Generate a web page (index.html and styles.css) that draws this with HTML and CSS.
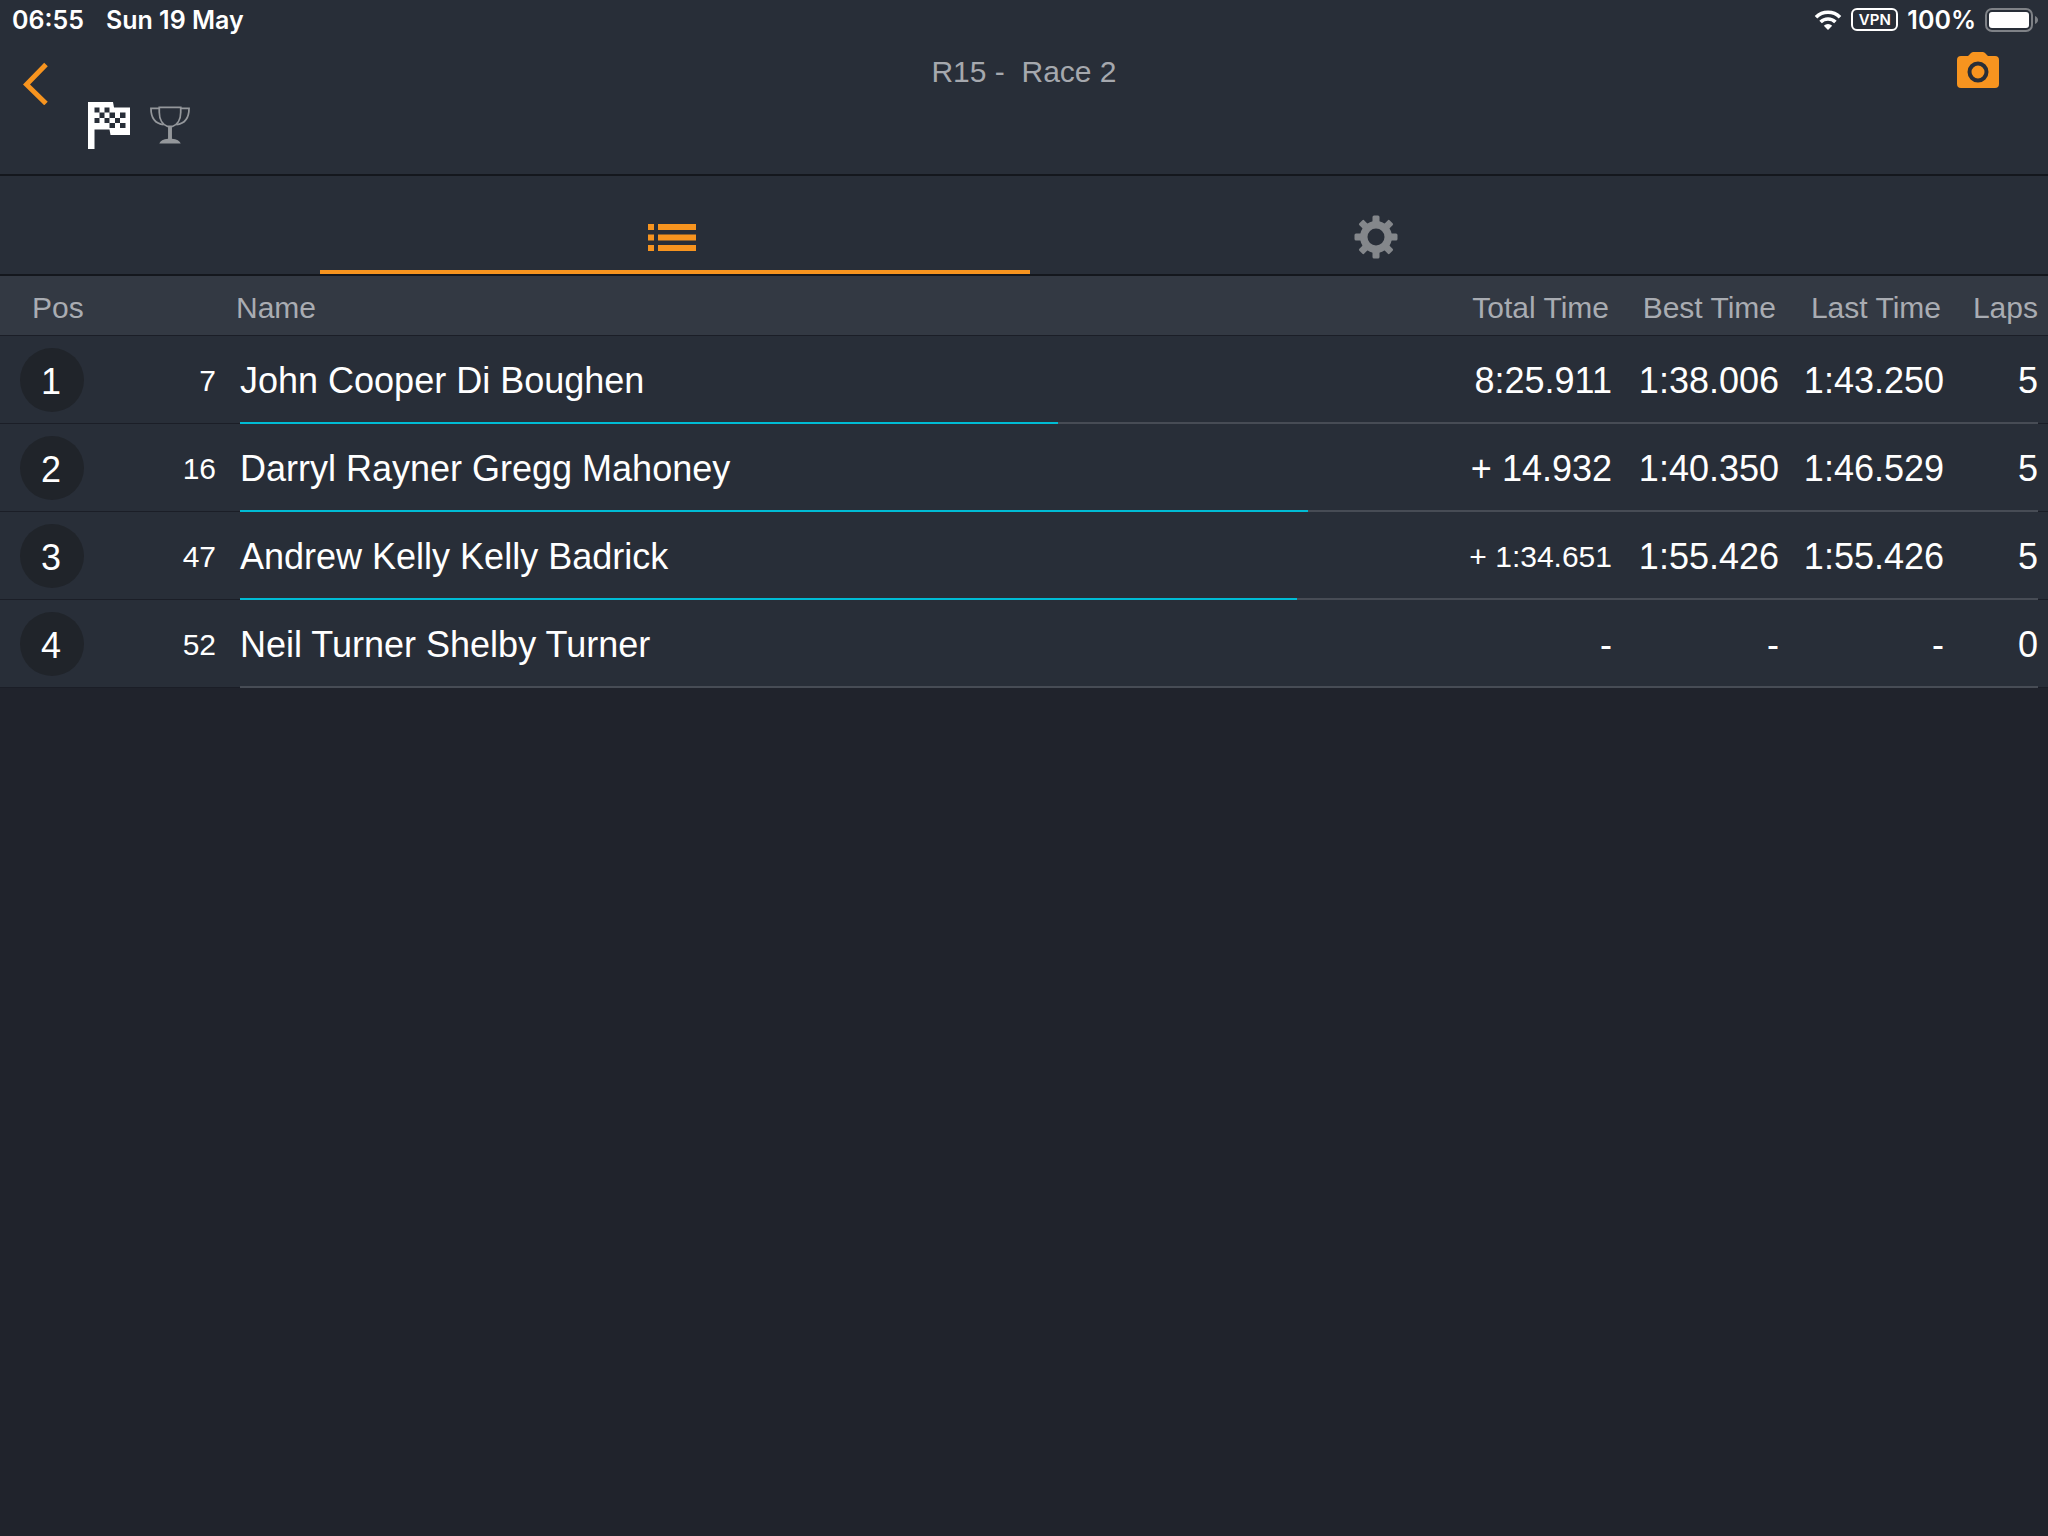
FILE: index.html
```
<!DOCTYPE html>
<html lang="en">
  <head>
    <meta charset="UTF-8" />
    <meta name="viewport" content="width=device-width, initial-scale=1.0" />
    <title>R15 - Race 2</title>
    <link rel="stylesheet" href="styles.css" />
  </head>

  <body>
    <header>
      <div class="status-bar">
        <div class="status-left">
          <span>06:55</span>
          <span>Sun 19 May</span>
        </div>
        <div class="status-right">
          <svg class="wifi" viewBox="0 0 28 20" width="28" height="20">
            <path d="M2 7.2a17 17 0 0 1 24 0" fill="none" stroke="#fff" stroke-width="3.6" />
            <path d="M6.6 12a10.6 10.6 0 0 1 14.8 0" fill="none" stroke="#fff" stroke-width="3.6" />
            <path d="M14 20l-4.2-4.3a6 6 0 0 1 8.4 0z" fill="#fff" />
          </svg>
          <span class="vpn">VPN</span>
          <span class="battery-level">100%</span>
          <svg class="battery" viewBox="0 0 53 24" width="53" height="24">
            <rect x="1" y="1" width="46" height="22" rx="6" fill="none" stroke="#7f8287" stroke-width="2" />
            <rect x="4" y="4" width="40" height="16" rx="3" fill="#fff" />
            <path d="M50 8c4 1.500 4 6.500 0 8z" fill="#7f8287" />
          </svg>
        </div>
      </div>

      <div class="title-bar">
        <button class="icon-button back" aria-label="Back">
          <svg viewBox="0 0 26 44" width="26" height="44">
            <path d="M23 3.500L3.500 23.500l19.500 19" fill="none" stroke="#f7941f" stroke-width="5" />
          </svg>
        </button>
        <h1>R15 - &nbsp;Race 2</h1>
        <button class="icon-button camera" aria-label="Camera">
          <svg viewBox="0 0 42 36" width="42" height="36">
            <path d="M4 4h7l3-3q1-1 2.500-1h9q1.500 0 2.500 1l3 3h7q4 0 4 4v24q0 4-4 4H4q-4 0-4-4V8q0-4 4-4z" fill="#f7941f" />
            <circle cx="21" cy="20" r="8.500" fill="none" stroke="#282e38" stroke-width="4" />
          </svg>
        </button>
      </div>

      <div class="race-icons">
        <svg class="flag" viewBox="0 0 42 48" width="42" height="48">
          <path d="M0 0h25l1 5.500h16V33H22.500l-1-5.500H6.500v19.500H0z" fill="#fff" />
          <path d="M6.500 5.500h5v5h-5zM16.500 5.500h5v5h-5zM11.500 10.500h5v5.500h-5zM21.500 10.500h5.500v5.500h-5.500zM32 10.500h5.500v5.500h-5.500zM6.500 16h5v5h-5zM16.500 16h5v5h-5zM27 16h5v5h-5zM21.500 21h5.500v5h-5.500zM32 21h5.500v5h-5.500z" fill="#282e38" />
        </svg>
        <svg class="trophy" viewBox="0 0 41 38" width="40" height="38">
          <g fill="none" stroke="#94979b" stroke-width="1.800">
            <path d="M9.500 1h22v5c0 8-4 13-8.500 14.500h-5C13.500 19 9.500 14 9.500 6z" />
            <path d="M9.500 2H1c0 9 4 15.500 13 16.500M31.500 2H40c0 9-4 15.500-13 16.500" />
          </g>
          <path d="M18.500 20.500h4V33c5 .500 8 2 9 5h-22c1-3 4-4.500 9-5z" fill="#94979b" />
        </svg>
      </div>
    </header>

    <nav class="tabs">
      <button class="tab active" aria-label="Results">
        <svg viewBox="0 0 48 27" width="48" height="27">
          <path d="M0 0h6v6H0zM10 0h38v6H10zM0 10.500h6v6H0zM10 10.500h38v6H10zM0 21h6v6H0zM10 21h38v6H10z" fill="#f7941f" />
        </svg>
      </button>
      <button class="tab" aria-label="Settings">
        <svg viewBox="-22 -22 44 44" width="44" height="44">
          <g fill="#84878b">
            <rect x="-3.500" y="-21.500" width="7" height="43" rx="1.500" />
            <rect x="-3.500" y="-21.500" width="7" height="43" rx="1.500" transform="rotate(45)" />
            <rect x="-3.500" y="-21.500" width="7" height="43" rx="1.500" transform="rotate(90)" />
            <rect x="-3.500" y="-21.500" width="7" height="43" rx="1.500" transform="rotate(135)" />
            <circle r="16" />
          </g>
          <circle r="8.500" fill="#282e38" />
        </svg>
      </button>
    </nav>

    <table class="results">
      <thead>
        <tr>
          <th class="pos">Pos</th>
          <th class="number"></th>
          <th class="name">Name</th>
          <th class="total">Total Time</th>
          <th class="best">Best Time</th>
          <th class="last">Last Time</th>
          <th class="laps">Laps</th>
        </tr>
      </thead>
      <tbody>
        <tr>
          <td class="pos"><span class="badge">1</span></td>
          <td class="number">7</td>
          <td class="name">
            John Cooper Di Boughen
            <div class="track"><div class="progress" style="width: 45.5%"></div></div>
          </td>
          <td class="total">8:25.911</td>
          <td class="best">1:38.006</td>
          <td class="last">1:43.250</td>
          <td class="laps">5</td>
        </tr>
        <tr>
          <td class="pos"><span class="badge">2</span></td>
          <td class="number">16</td>
          <td class="name">
            Darryl Rayner Gregg Mahoney
            <div class="track"><div class="progress" style="width: 59.4%"></div></div>
          </td>
          <td class="total">+ 14.932</td>
          <td class="best">1:40.350</td>
          <td class="last">1:46.529</td>
          <td class="laps">5</td>
        </tr>
        <tr>
          <td class="pos"><span class="badge">3</span></td>
          <td class="number">47</td>
          <td class="name">
            Andrew Kelly Kelly Badrick
            <div class="track"><div class="progress" style="width: 58.8%"></div></div>
          </td>
          <td class="total long">+ 1:34.651</td>
          <td class="best">1:55.426</td>
          <td class="last">1:55.426</td>
          <td class="laps">5</td>
        </tr>
        <tr>
          <td class="pos"><span class="badge">4</span></td>
          <td class="number">52</td>
          <td class="name">
            Neil Turner Shelby Turner
            <div class="track"></div>
          </td>
          <td class="total">-</td>
          <td class="best">-</td>
          <td class="last">-</td>
          <td class="laps">0</td>
        </tr>
      </tbody>
    </table>
  </body>
</html>
```
FILE: styles.css
```
* {
  box-sizing: border-box;
}

body {
  margin: 0;
  background-color: #20232c;
  color: #fff;
  font-family: "Liberation Sans", Arial, sans-serif;
}

button {
  padding: 0;
  border: none;
  background: none;
  cursor: pointer;
}

svg {
  display: block;
}

header {
  background-color: #282e38;
  border-bottom: 2px solid #14171d;
  padding-bottom: 24px;
}

/* status bar */
.status-bar {
  display: flex;
  justify-content: space-between;
  align-items: center;
  height: 39px;
  padding: 0 10px 0 12px;
  font-family: Inter, sans-serif;
  font-size: 25px;
  font-weight: 600;
}

.status-left {
  display: flex;
  gap: 22px;
}

.status-right {
  display: flex;
  align-items: center;
  gap: 9px;
}

.vpn {
  width: 47px;
  height: 23px;
  border: 2px solid #fff;
  border-radius: 6px;
  font-size: 15px;
  line-height: 19px;
  text-align: center;
}

/* title */
.title-bar {
  display: grid;
  grid-template-columns: 1fr auto 1fr;
  height: 63px;
  padding: 0 49px 0 23px;
}

.title-bar h1 {
  margin: 0;
  padding-left: 26px;
  color: #a5a8ae;
  font-size: 30px;
  font-weight: normal;
  line-height: 66px;
}

.back {
  align-self: end;
  justify-self: start;
}

.camera {
  align-self: start;
  justify-self: end;
  margin-top: 13px;
}

.race-icons {
  display: flex;
  align-items: flex-start;
  gap: 20px;
  padding-left: 88px;
}

.trophy {
  margin-top: 4px;
}

/* tabs */
.tabs {
  display: flex;
  padding: 0 320px;
  background-color: #282e38;
  border-bottom: 2px solid #14171d;
}

.tab {
  position: relative;
  display: flex;
  flex: 1;
  justify-content: center;
  align-items: center;
  height: 98px;
  padding-top: 24px;
}

.tab.active::after {
  content: "";
  position: absolute;
  left: 0;
  right: -6px;
  bottom: 0;
  height: 4px;
  background-color: #f7941f;
}

/* results */
.results {
  width: 100%;
  border-collapse: separate;
  border-spacing: 0;
  table-layout: fixed;
}

.results th {
  height: 60px;
  padding: 4px 0 0;
  background-color: #333943;
  border-bottom: 1px solid #1b1e27;
  color: #a9acb2;
  font-size: 30px;
  font-weight: normal;
  text-align: right;
}

.results td {
  height: 88px;
  padding: 3px 0 0;
  background-color: #282e38;
  border-bottom: 1px solid #1b1e27;
  font-size: 36px;
  text-align: right;
}

.results tbody tr {
  position: relative;
}

.results .pos {
  width: 116px;
  text-align: left;
}

.results th.pos {
  padding-left: 32px;
}

.results td.pos {
  padding-top: 0;
  padding-left: 20px;
}

.results .number {
  width: 120px;
  padding-right: 20px;
  font-size: 30px;
}

.results .name {
  text-align: left;
}

.results td.name {
  padding-left: 4px;
}

.results .total {
  width: 160px;
}

.results .best {
  width: 167px;
}

.results .last {
  width: 165px;
}

.results .laps {
  width: 104px;
  padding-right: 10px;
}

.results .long {
  font-size: 30px;
}

.results th.total,
.results th.best,
.results th.last {
  padding-right: 3px;
}

.badge {
  display: block;
  width: 64px;
  height: 64px;
  padding-right: 2px;
  border-radius: 50%;
  background-color: #20242a;
  line-height: 67px;
  text-align: center;
}

.track {
  position: absolute;
  left: 240px;
  right: 10px;
  bottom: 0;
  height: 2px;
  background-color: #474c55;
}

.progress {
  height: 2px;
  background-color: #00bcd4;
}
```
